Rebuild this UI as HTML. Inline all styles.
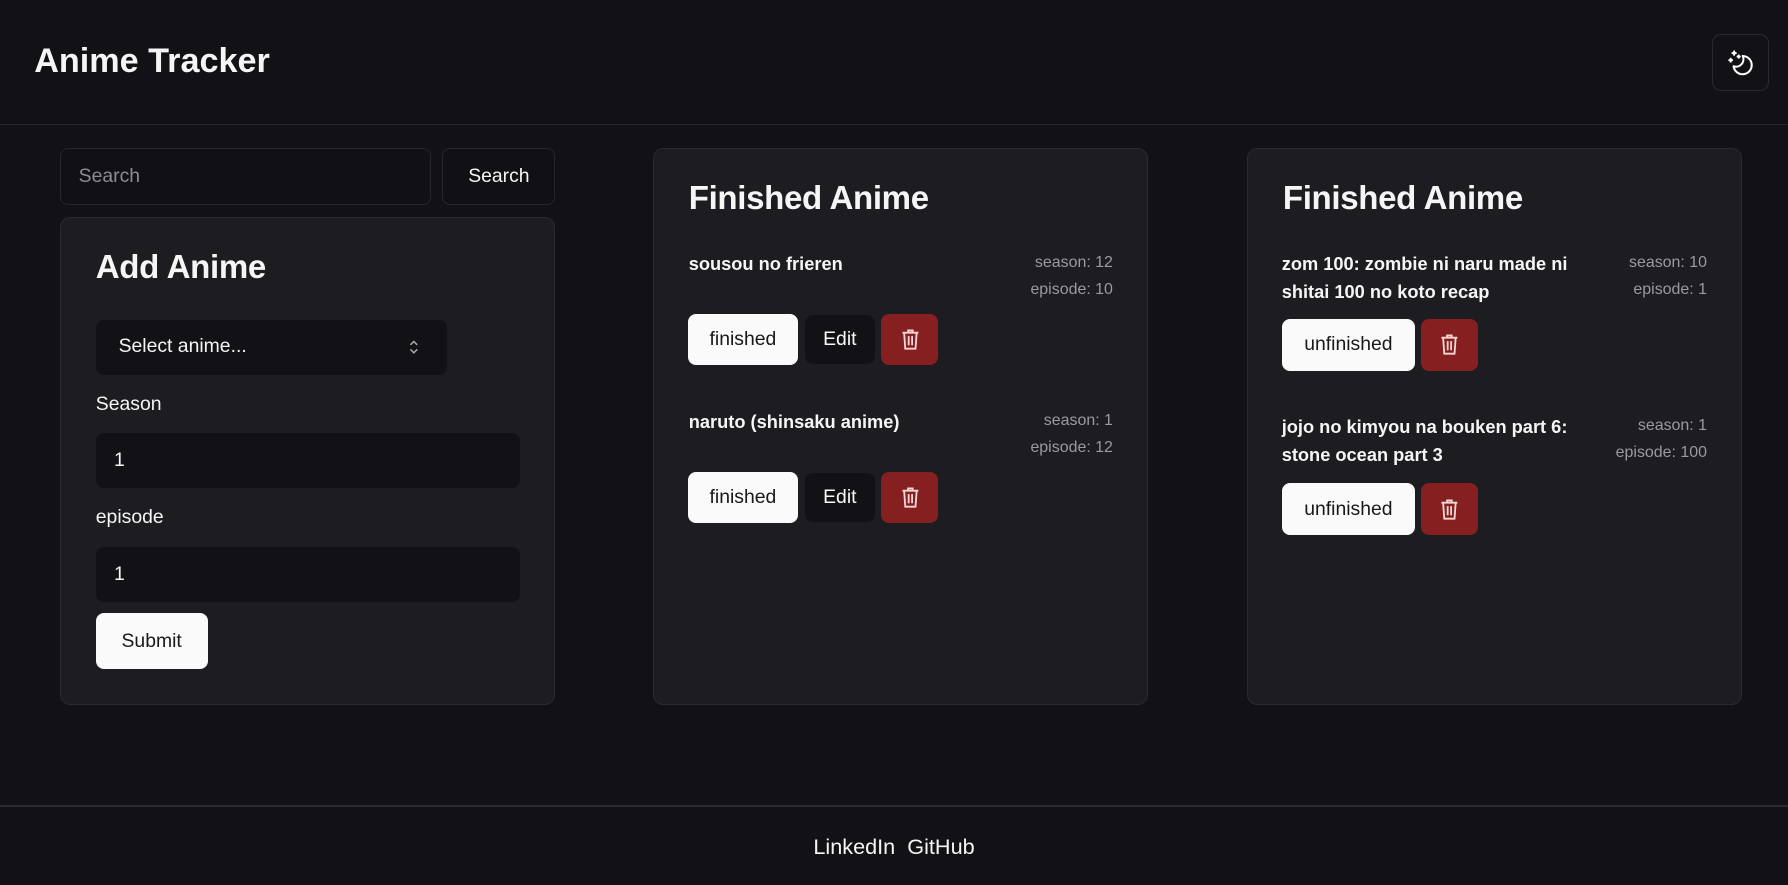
<!DOCTYPE html>
<html><head><meta charset="utf-8"><style>
html,body{margin:0;padding:0;background:#121116;overflow:hidden}
body{width:1568px;height:776px;zoom:1.14031;position:relative;font-family:"Liberation Sans",Arial,sans-serif;color:#f5f5f5}
.a{position:absolute;box-sizing:border-box}
.hdr{left:0;top:0;width:1568px;height:110px;border-bottom:1px solid #26252b}
.title{left:30px;top:37px;font-size:30px;font-weight:bold;letter-spacing:0}
.card{background:#1d1c21;border:1px solid #2a2930;border-radius:9px}
.inp{background:#121116;border-radius:7px}
.btn{border-radius:7px;display:flex;align-items:center;justify-content:center;font-size:17px}
.w{background:#fafafa;color:#18181b}
.d{background:#121116;color:#fafafa}
.r{background:#861f1f}
h2{margin:0;font-size:29px;font-weight:bold;letter-spacing:-0.3px;position:absolute}
.it{font-size:16px;font-weight:bold;line-height:25px}
.meta{font-size:14px;color:#9a9aa2;text-align:right;line-height:24px}
.lbl{font-size:17px}
</style></head><body>
<div class="a hdr"></div>
<div class="a title">Anime Tracker</div>
<div class="a" style="left:1501px;top:30px;width:50px;height:50px;border:1px solid #2a2930;border-radius:8px"></div>
<svg class="a" style="left:1513px;top:42px" width="26" height="26" viewBox="0 0 26 26" fill="none" stroke="#fff" stroke-width="1.8" stroke-linecap="round" stroke-linejoin="round">
<path d="M15.5 7a8 8 0 1 1 -8 9a6.5 6.5 0 0 0 8 -9z"/>
<path d="M8 3v3M6.5 4.5h3M12 6.5v2M11 7.5h2M5 9.5v2.5M3.8 10.7h2.4"/>
</svg>

<div class="a inp" style="left:53px;top:130px;width:325px;height:50px;border:1px solid #27262c;background:#111015"></div>
<div class="a" style="left:69px;top:145px;font-size:17px;color:#8c8c94">Search</div>
<div class="a btn" style="left:388px;top:130px;width:99px;height:50px;border:1px solid #27262c;background:#111015">Search</div>

<div class="a card" style="left:53px;top:190px;width:434px;height:428px"></div>
<h2 style="left:84px;top:218px">Add Anime</h2>
<div class="a inp" style="left:84px;top:281px;width:308px;height:48px"></div>
<div class="a" style="left:104px;top:294px;font-size:17px">Select anime...</div>
<svg class="a" style="left:357px;top:296px" width="12" height="16" viewBox="0 0 12 16" fill="none" stroke="#aaa" stroke-width="1.3"><path d="M3 6l3-3 3 3M3 10l3 3 3-3"/></svg>
<div class="a lbl" style="left:84px;top:345px">Season</div>
<div class="a inp" style="left:84px;top:380px;width:372px;height:48px"></div>
<div class="a" style="left:100px;top:394px;font-size:17px">1</div>
<div class="a lbl" style="left:84px;top:444px">episode</div>
<div class="a inp" style="left:84px;top:480px;width:372px;height:48px"></div>
<div class="a" style="left:100px;top:494px;font-size:17px">1</div>
<div class="a btn w" style="left:84px;top:538px;width:98px;height:49px">Submit</div>

<div class="a card" style="left:573px;top:130px;width:434px;height:488px"></div>
<h2 style="left:604px;top:158px">Finished Anime</h2>
<div class="a it" style="left:604px;top:219px">sousou no frieren</div>
<div class="a meta" style="right:592px;top:218px">season: 12<br>episode: 10</div>
<div class="a btn w" style="left:603px;top:275px;width:97px;height:45px">finished</div>
<div class="a btn d" style="left:706px;top:276px;width:61px;height:43px">Edit</div>
<div class="a btn r" style="left:773px;top:275px;width:50px;height:45px"><svg width="20" height="22" viewBox="0 0 20 22" fill="none" stroke="#f3d6d6" stroke-width="1.6"><path d="M3 5h14M8 5V3h4v2M4.5 5l1 14h9l1-14M8.5 8v8M11.5 8v8"/></svg></div>
<div class="a it" style="left:604px;top:358px">naruto (shinsaku anime)</div>
<div class="a meta" style="right:592px;top:357px">season: 1<br>episode: 12</div>
<div class="a btn w" style="left:603px;top:414px;width:97px;height:45px">finished</div>
<div class="a btn d" style="left:706px;top:415px;width:61px;height:43px">Edit</div>
<div class="a btn r" style="left:773px;top:414px;width:50px;height:45px"><svg width="20" height="22" viewBox="0 0 20 22" fill="none" stroke="#f3d6d6" stroke-width="1.6"><path d="M3 5h14M8 5V3h4v2M4.5 5l1 14h9l1-14M8.5 8v8M11.5 8v8"/></svg></div>

<div class="a card" style="left:1094px;top:130px;width:434px;height:488px"></div>
<h2 style="left:1125px;top:158px">Finished Anime</h2>
<div class="a it" style="left:1124px;top:219px;width:285px">zom 100: zombie ni naru made ni shitai 100 no koto recap</div>
<div class="a meta" style="right:71px;top:218px">season: 10<br>episode: 1</div>
<div class="a btn w" style="left:1124px;top:280px;width:117px;height:45px">unfinished</div>
<div class="a btn r" style="left:1246px;top:280px;width:50px;height:45px"><svg width="20" height="22" viewBox="0 0 20 22" fill="none" stroke="#f3d6d6" stroke-width="1.6"><path d="M3 5h14M8 5V3h4v2M4.5 5l1 14h9l1-14M8.5 8v8M11.5 8v8"/></svg></div>
<div class="a it" style="left:1124px;top:362px;width:285px">jojo no kimyou na bouken part 6: stone ocean part 3</div>
<div class="a meta" style="right:71px;top:361px">season: 1<br>episode: 100</div>
<div class="a btn w" style="left:1124px;top:424px;width:117px;height:45px">unfinished</div>
<div class="a btn r" style="left:1246px;top:424px;width:50px;height:45px"><svg width="20" height="22" viewBox="0 0 20 22" fill="none" stroke="#f3d6d6" stroke-width="1.6"><path d="M3 5h14M8 5V3h4v2M4.5 5l1 14h9l1-14M8.5 8v8M11.5 8v8"/></svg></div>

<div class="a" style="left:0;top:706px;width:1568px;height:2px;background:#2a2930"></div>
<div class="a" style="left:0;top:731px;width:1568px;text-align:center;font-size:19px">LinkedIn&nbsp; GitHub</div>
</body></html>
